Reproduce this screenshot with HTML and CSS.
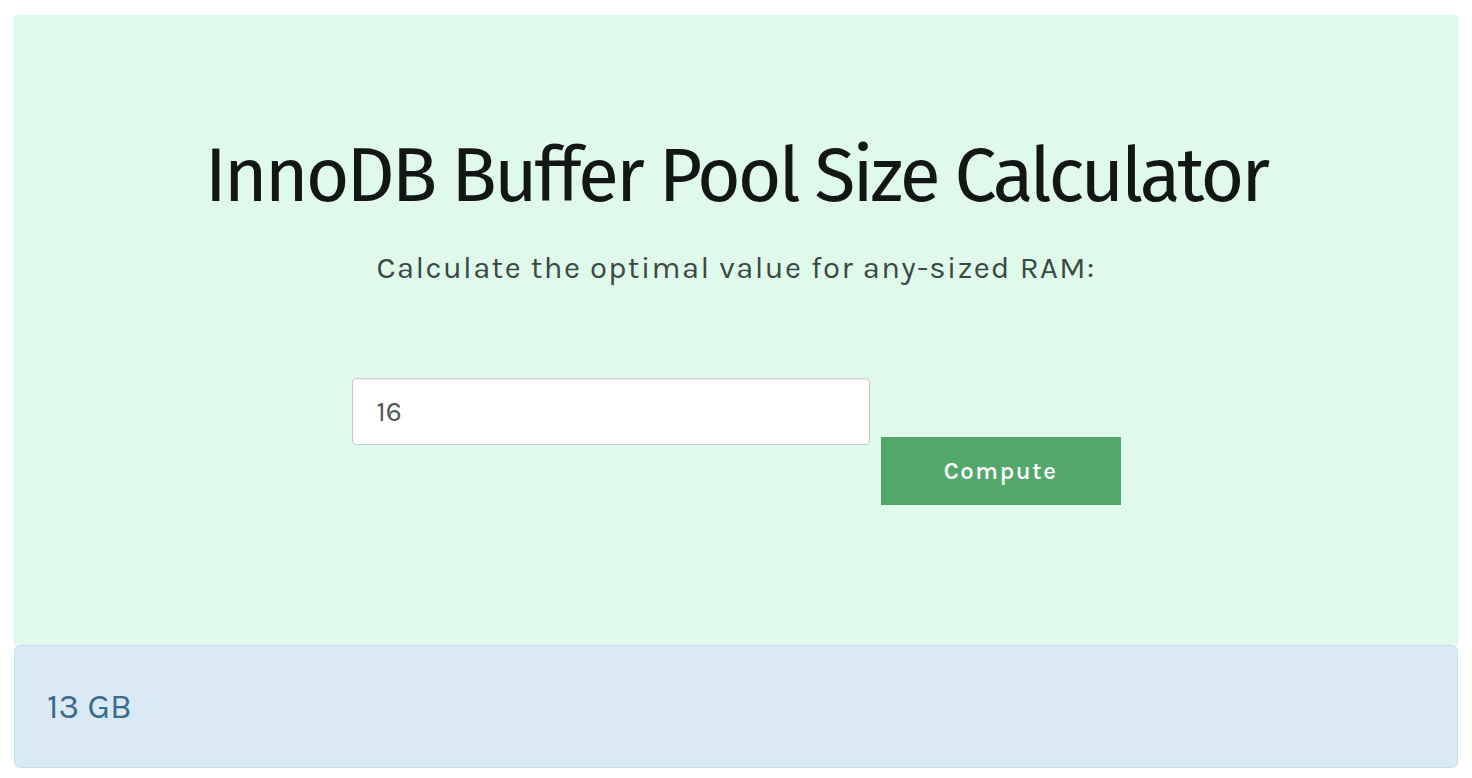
FILE: index.html
```html
<!DOCTYPE html>
<html lang="en">
<head>
<meta charset="utf-8">
<title>InnoDB Buffer Pool Size Calculator</title>
<link rel="stylesheet" href="styles.css">
</head>
<body>
<div class="page">
  <section class="hero">
    <h1 class="title">InnoDB Buffer Pool Size Calculator</h1>
    <p class="lead">Calculate the optimal value for any-sized RAM:</p>
    <form class="calc">
      <input class="ram-input" type="text" value="16">
      <button class="compute-btn" type="button">Compute</button>
    </form>
  </section>
  <div class="result">13 GB</div>
</div>
</body>
</html>
```

FILE: styles.css
```css
html, body {
  margin: 0;
  padding: 0;
  background: #ffffff;
}

.page {
  padding: 15px 14px 10px 14px;
}

.hero {
  background: #dff9ea;
  height: 630px;
  box-sizing: border-box;
  padding-top: 116px;
  display: flex;
  flex-direction: column;
  align-items: center;
}

.title {
  margin: 0;
  font-family: "Fira Sans", "Lato", "Noto Sans", sans-serif;
  font-weight: 400;
  font-size: 75px;
  line-height: 90px;
  letter-spacing: -3px;
  color: #121614;
}

.lead {
  margin: 29px 0 0 0;
  font-family: "Karla", "Inter", "Noto Sans", sans-serif;
  font-size: 31px;
  line-height: 36px;
  color: #3b4943;
  letter-spacing: 1.4px;
}

.calc {
  margin-top: 92px;
  display: flex;
  align-items: flex-start;
  gap: 11px;
}

.ram-input {
  width: 518px;
  height: 67px;
  box-sizing: border-box;
  border: 1px solid #cccccc;
  border-radius: 4px;
  box-shadow: inset 0 1px 2px rgba(0,0,0,0.08);
  background: #ffffff;
  padding: 0 24px;
  font-family: "Karla", "Inter", "Noto Sans", sans-serif;
  font-size: 28px;
  color: #555555;
  outline: none;
}

.compute-btn {
  margin-top: 59px;
  width: 240px;
  height: 68px;
  border: none;
  border-radius: 0;
  background: #52a76a;
  color: #ffffff;
  font-family: "Karla", "Inter", "Noto Sans", sans-serif;
  font-weight: 600;
  font-size: 24px;
  letter-spacing: 1.6px;
  cursor: pointer;
}

.result {
  background: #d9eaf5;
  border: 1px solid #c3e0ec;
  border-radius: 6px;
  height: 123px;
  box-sizing: border-box;
  padding: 0 32px;
  display: flex;
  align-items: center;
  font-family: "Karla", "Inter", "Noto Sans", sans-serif;
  font-size: 35px;
  color: #3a6a8e;
}
```
